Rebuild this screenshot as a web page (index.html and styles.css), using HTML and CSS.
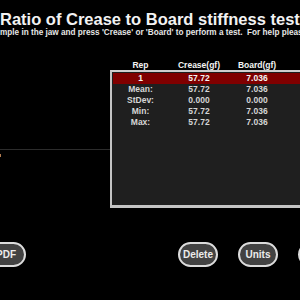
FILE: index.html
```html
<!DOCTYPE html>
<html>
<head>
<meta charset="utf-8">
<link rel="stylesheet" href="styles.css">
</head>
<body>
<div class="screen">
  <h1 class="title">Ratio of Crease to Board stiffness test</h1>
  <p class="subtitle">mple in the jaw and press 'Crease' or 'Board' to perform a test.&nbsp; For help please press 'Help'.</p>
  <div class="main">
    <div class="left">
      <div class="hline"></div>
      <div class="mark"></div>
    </div>
    <div class="right">
      <div class="thead">
        <span class="c1">Rep</span><span class="c2">Crease(gf)</span><span class="c3">Board(gf)</span>
      </div>
      <div class="box">
        <div class="row sel"><span class="c1">1</span><span class="c2">57.72</span><span class="c3">7.036</span></div>
        <div class="row"><span class="c1">Mean:</span><span class="c2">57.72</span><span class="c3">7.036</span></div>
        <div class="row"><span class="c1">StDev:</span><span class="c2">0.000</span><span class="c3">0.000</span></div>
        <div class="row"><span class="c1">Min:</span><span class="c2">57.72</span><span class="c3">7.036</span></div>
        <div class="row"><span class="c1">Max:</span><span class="c2">57.72</span><span class="c3">7.036</span></div>
      </div>
    </div>
  </div>
  <div class="toolbar">
    <button class="pill pdf">PDF</button>
    <button class="pill">Delete</button>
    <button class="pill">Units</button>
    <button class="pill">Help</button>
  </div>
</div>
</body>
</html>
```
FILE: styles.css
```css
html, body {
  margin: 0;
  padding: 0;
  background: #000;
}
body {
  width: 300px;
  height: 300px;
  overflow: hidden;
  font-family: "Liberation Sans", Arial, sans-serif;
  color: #fff;
}
.screen {
  width: 300px;
  height: 300px;
  overflow: hidden;
}
.title {
  margin: 0;
  padding-top: 11px;
  font-size: 16.5px;
  line-height: 17px;
  font-weight: bold;
  white-space: nowrap;
  color: #f2f2f2;
}
.subtitle {
  margin: 0;
  font-size: 8.2px;
  line-height: 10px;
  font-weight: bold;
  white-space: nowrap;
  color: #e6e6e6;
}
.main {
  display: flex;
  height: 204px;
}
.left {
  width: 110px;
  flex: none;
  padding-top: 111px;
}
.hline {
  height: 1px;
  background: #2c2c2c;
}
.mark {
  margin-top: 4px;
  width: 1px;
  height: 3px;
  background: #b07a50;
}
.right {
  flex: none;
  width: 200px;
  padding-top: 22px;
}
.thead, .row {
  display: grid;
  grid-template-columns: 55px 62px 54px 1fr;
  font-size: 8.5px;
  font-weight: bold;
  text-align: center;
  white-space: nowrap;
}
.thead {
  height: 10px;
  line-height: 10px;
  padding-left: 3px;
  color: #f4f4f4;
}
.box {
  box-sizing: border-box;
  height: 138px;
  border-top: 2px solid #cfcfcf;
  border-left: 2px solid #c4c4c4;
  border-bottom: 3px solid #c4c4c4;
  padding: 1px 0 0 1px;
  background: #1f1f1f;
}
.row {
  height: 11px;
  line-height: 11px;
  color: #d6d6d6;
}
.row.sel {
  background: #800000;
  color: #f4f4f4;
}
.toolbar {
  display: flex;
  gap: 20px;
  padding-top: 0;
}
.pill {
  flex: none;
  box-sizing: border-box;
  width: 40px;
  height: 25px;
  padding: 0;
  border: 2px solid #dcdcdc;
  border-radius: 13px;
  background: #424242;
  color: #ececec;
  font-family: "Liberation Sans", Arial, sans-serif;
  font-size: 10px;
  font-weight: bold;
  display: flex;
  align-items: center;
  justify-content: center;
}
.pdf {
  margin-left: -14px;
  margin-right: 132px;
}
```
